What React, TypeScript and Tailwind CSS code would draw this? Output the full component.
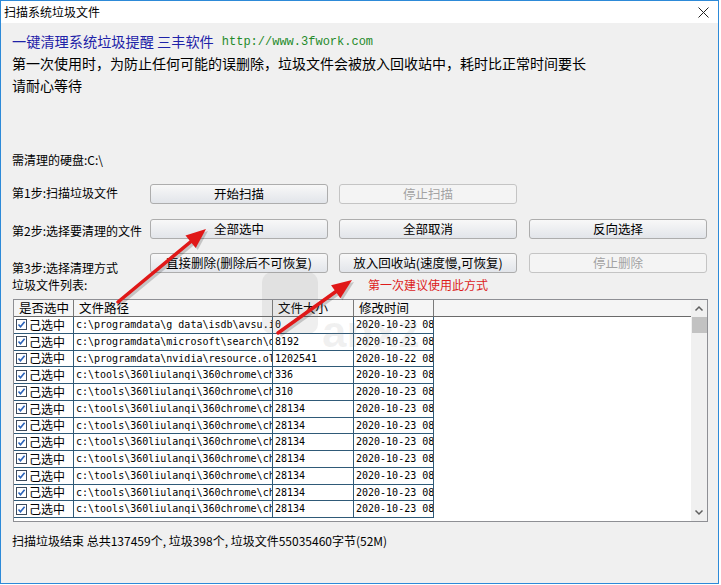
import React from "react";

const cjk = "font-['Noto_Sans_CJK_SC',_'Noto_Sans',_sans-serif]";
const mono = "font-['DejaVu_Sans_Mono',_'Liberation_Mono',_monospace]";

const rows = [
  ["c:\\programdata\\g data\\isdb\\avsu.ini", "0", "2020-10-23 08:12:06"],
  ["c:\\programdata\\microsoft\\search\\data", "8192", "2020-10-23 08:12:06"],
  ["c:\\programdata\\nvidia\\resource.old", "1202541", "2020-10-22 08:40:11"],
  ["c:\\tools\\360liulanqi\\360chrome\\chrome", "336", "2020-10-23 08:12:06"],
  ["c:\\tools\\360liulanqi\\360chrome\\chrome", "310", "2020-10-23 08:12:06"],
  ["c:\\tools\\360liulanqi\\360chrome\\chrome", "28134", "2020-10-23 08:12:06"],
  ["c:\\tools\\360liulanqi\\360chrome\\chrome", "28134", "2020-10-23 08:12:06"],
  ["c:\\tools\\360liulanqi\\360chrome\\chrome", "28134", "2020-10-23 08:12:06"],
  ["c:\\tools\\360liulanqi\\360chrome\\chrome", "28134", "2020-10-23 08:12:06"],
  ["c:\\tools\\360liulanqi\\360chrome\\chrome", "28134", "2020-10-23 08:12:06"],
  ["c:\\tools\\360liulanqi\\360chrome\\chrome", "28134", "2020-10-23 08:12:06"],
  ["c:\\tools\\360liulanqi\\360chrome\\chrome", "28134", "2020-10-23 08:12:06"],
];

const Btn = ({ label, disabled }: { label: string; disabled?: boolean }) => (
  <div
    className={
      "w-[178px] h-[20px] rounded-[3px] border flex items-center justify-center text-[12.5px] leading-none " +
      (disabled
        ? "border-[#c4c4c4] bg-[#f4f4f4] text-[#a3a3a3]"
        : "border-[#adadad] bg-linear-to-b from-[#f8f8f8] to-[#e2e5ea] text-black")
    }
  >
    {label}
  </div>
);

const Check = () => (
  <svg width="11" height="11" viewBox="0 0 11 11" className="shrink-0">
    <rect x="0.5" y="0.5" width="10" height="10" fill="#fff" stroke="#3c4a5c" />
    <path d="M2.5 5.5 L4.5 7.8 L8.6 2.8" fill="none" stroke="#2a62b8" strokeWidth="1.6" />
  </svg>
);

function arrowPts(x1: number, y1: number, x2: number, y2: number) {
  const dx = x2 - x1;
  const dy = y2 - y1;
  const len = Math.hypot(dx, dy);
  const ux = dx / len;
  const uy = dy / len;
  const bx = x2 - ux * 20;
  const by = y2 - uy * 20;
  const nx = -uy * 8;
  const ny = ux * 8;
  return {
    line: [x1, y1, bx + ux * 2, by + uy * 2],
    head: `${x2},${y2} ${bx + nx},${by + ny} ${bx - nx},${by - ny}`,
  };
}

const Arrow = ({ a }: { a: number[] }) => {
  const p = arrowPts(a[0], a[1], a[2], a[3]);
  const s = arrowPts(a[0] + 2, a[1] + 2, a[2] + 2, a[3] + 2);
  return (
    <g>
      <line x1={s.line[0]} y1={s.line[1]} x2={s.line[2]} y2={s.line[3]} stroke="#000" strokeOpacity="0.18" strokeWidth="4" />
      <polygon points={s.head} fill="#000" fillOpacity="0.18" />
      <line x1={p.line[0]} y1={p.line[1]} x2={p.line[2]} y2={p.line[3]} stroke="#e01818" strokeWidth="3.5" strokeLinecap="round" />
      <polygon points={p.head} fill="#e01818" />
    </g>
  );
};

export default function App() {
  return (
    <div className={"relative w-[721px] h-[585px] bg-white overflow-hidden " + cjk}>
      <div className="w-[719px] h-[584px] border border-[#2d8ad8] bg-[#f0f0f0] flex flex-col">
        {/* title bar */}
        <div className="h-[22px] bg-white flex items-center justify-between pl-[3px] pr-[9px]">
          <span className="text-[12px] text-black">扫描系统垃圾文件</span>
          <svg width="11" height="11" viewBox="0 0 11 11">
            <path d="M0.5 0.5 L10.5 10.5 M10.5 0.5 L0.5 10.5" stroke="#222" strokeWidth="1" />
          </svg>
        </div>

        <div className="flex flex-col pl-[11px]">
          <div className="mt-[8px] h-[21px] flex items-center text-[14.2px] text-[#1e22a8]">
            一键清理系统垃圾提醒 三丰软件
            <span className="ml-[8px] text-[12px] text-[#1f8a2a] font-['Liberation_Mono',_monospace]">
              http://www.3fwork.com
            </span>
          </div>
          <div className="h-[22px] flex items-center text-[14px] text-black">
            第一次使用时，为防止任何可能的误删除，垃圾文件会被放入回收站中，耗时比正常时间要长
          </div>
          <div className="h-[22px] flex items-center text-[14px] text-black">请耐心等待</div>

          <div className="mt-[56px] h-[16px] leading-[16px] text-[12px]">需清理的硬盘:C:\</div>

          <div className="mt-[16px] flex items-start">
            <div className="w-[138px] pt-[1px] leading-[16px] text-[12px]">第1步:扫描垃圾文件</div>
            <Btn label="开始扫描" />
            <div className="ml-[11px]">
              <Btn label="停止扫描" disabled />
            </div>
          </div>

          <div className="mt-[15px] flex items-start">
            <div className="w-[138px] pt-[4px] leading-[16px] text-[12px]">第2步:选择要清理的文件</div>
            <Btn label="全部选中" />
            <div className="ml-[11px]">
              <Btn label="全部取消" />
            </div>
            <div className="ml-[12px]">
              <Btn label="反向选择" />
            </div>
          </div>

          <div className="mt-[14px] flex items-start">
            <div className="w-[138px] pt-[7px] leading-[16px] text-[12px]">第3步:选择清理方式</div>
            <Btn label="直接删除(删除后不可恢复)" />
            <div className="ml-[11px]">
              <Btn label="放入回收站(速度慢,可恢复)" />
            </div>
            <div className="ml-[12px]">
              <Btn label="停止删除" disabled />
            </div>
          </div>

          <div className="mt-[1px] h-[16px] leading-[16px] text-[12px]">垃圾文件列表:</div>

          {/* list view */}
          <div className="ml-[1px] mt-[6px] w-[695px] h-[223px] border border-[#8e8f94] bg-white flex">
            <div className="flex-1 flex flex-col overflow-hidden">
              <div className="h-[17px] shrink-0 flex bg-[#f5f5f5] border-b border-[#6a6a6a] text-[12.5px] leading-[16px]">
                <div className="w-[60px] shrink-0 border-r border-[#7a7a7a] pl-[5px] whitespace-nowrap">是否选中</div>
                <div className="w-[199px] shrink-0 border-r border-[#7a7a7a] pl-[5px]">文件路径</div>
                <div className="w-[81px] shrink-0 border-r border-[#7a7a7a] pl-[5px]">文件大小</div>
                <div className="w-[80px] shrink-0 border-r border-[#7a7a7a] pl-[5px]">修改时间</div>
                <div className="flex-1" />
              </div>
              {rows.map((r, i) => (
                <div key={i} className="h-[16.75px] shrink-0 flex">
                  <div className="w-[60px] shrink-0 border-r border-b border-[#2f5a78] flex items-center pl-[2px] gap-[2px] text-[12px]">
                    <Check />
                    <span>己选中</span>
                  </div>
                  <div className={"w-[199px] shrink-0 border-r border-b border-[#2f5a78] pl-[2px] overflow-hidden whitespace-nowrap text-[10px] leading-[16px] " + mono}>
                    {r[0]}
                  </div>
                  <div className={"w-[81px] shrink-0 border-r border-b border-[#2f5a78] pl-[2px] overflow-hidden whitespace-nowrap text-[10px] leading-[16px] " + mono}>
                    {r[1]}
                  </div>
                  <div className={"w-[80px] shrink-0 border-r border-b border-[#2f5a78] pl-[2px] overflow-hidden whitespace-nowrap text-[10px] leading-[16px] " + mono}>
                    {r[2]}
                  </div>
                </div>
              ))}
            </div>
            {/* scrollbar */}
            <div className="w-[16px] shrink-0 bg-[#f0f0f0] flex flex-col items-center">
              <svg width="16" height="17" viewBox="0 0 16 17">
                <path d="M4.5 10.5 L8 7 L11.5 10.5" fill="none" stroke="#606060" strokeWidth="1.5" />
              </svg>
              <div className="w-[15px] h-[16px] bg-[#c2c2c2]" />
              <div className="flex-1" />
              <svg width="16" height="17" viewBox="0 0 16 17">
                <path d="M4.5 6.5 L8 10 L11.5 6.5" fill="none" stroke="#606060" strokeWidth="1.5" />
              </svg>
            </div>
          </div>

          <div className="mt-[11px] h-[16px] leading-[16px] text-[12px]">
            扫描垃圾结束 总共137459个, 垃圾398个, 垃圾文件55035460字节(52M)
          </div>
        </div>
      </div>

      {/* annotations laid over the screenshot */}
      <svg className="absolute inset-0 pointer-events-none" width="721" height="585" viewBox="0 0 721 585">
        <rect x="262" y="272" width="56" height="62" rx="10" fill="#7a7a7a" fillOpacity="0.12" />
        <text x="322" y="347" fontSize="44" fontFamily="Liberation Sans, sans-serif" fontWeight="bold" fill="#8a8a8a" fillOpacity="0.12">
          anxz
        </text>
        <Arrow a={[118, 302, 206, 229]} />
        <Arrow a={[278, 333, 352, 280]} />
      </svg>
      <span className="absolute left-[368px] top-[277px] text-[12px] leading-[16px] text-[#dd1c1c]">
        第一次建议使用此方式
      </span>
    </div>
  );
}
